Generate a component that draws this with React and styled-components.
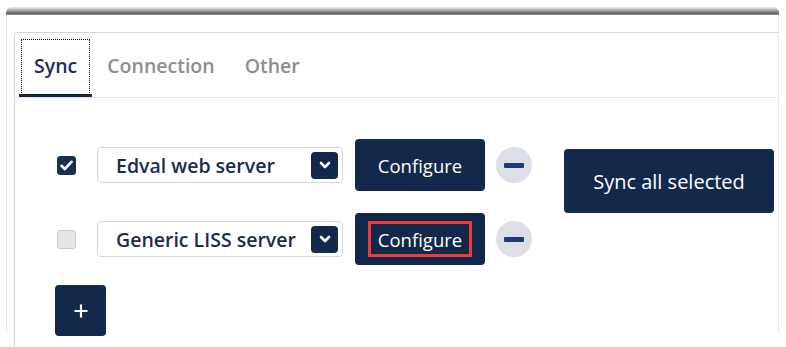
import React from 'react';
import styled, { createGlobalStyle } from 'styled-components';

const NAVY = '#13294b';

const Global = createGlobalStyle`
  html, body { margin: 0; padding: 0; background: #fff; overflow: hidden; }
  body {
    width: 786px;
    height: 347px;
    font-family: "Open Sans", "Noto Sans", sans-serif;
  }
  * { box-sizing: border-box; }
`;

const Frame = styled.div`
  margin: 7px 7px 0 6px;
  height: 326px;
  border-left: 1px solid #e8e8e8;
  border-right: 1px solid #e8e8e8;
  border-radius: 6px 6px 0 0;
  background: #fff;
  display: flex;
  flex-direction: column;
`;

const FrameEdge = styled.div`
  height: 8px;
  margin: 0 -1px;
  border-radius: 6px 6px 0 0;
  background: linear-gradient(to bottom, #ececec 0%, #b8b8b8 35%, #7a7a7a 65%, #606060 85%, #a8a8a8 100%);
  flex-shrink: 0;
`;

const Panel = styled.div`
  margin: 17px 0 0 7px;
  height: 330px;
  flex-shrink: 0;
  border-left: 1px solid #d3d9e1;
  border-top: 1px solid #d3d9e1;
  border-top-left-radius: 4px;
  background: #fff;
`;

const TabBar = styled.div`
  display: flex;
  padding: 4px 0 0 4px;
  border-bottom: 1px solid #e4e4e4;
`;

const Tab = styled.div`
  height: 60px;
  padding: 0 15px;
  display: flex;
  align-items: center;
  font-size: 19.5px;
  font-weight: 600;
  color: ${p => (p.$active ? '#1c2f55' : '#8e8e8e')};
  border-bottom: 3px solid ${p => (p.$active ? NAVY : 'transparent')};
  outline: ${p => (p.$active ? '1px dotted #111' : 'none')};
  outline-offset: -3px;
`;

const Content = styled.div`
  display: flex;
  align-items: flex-start;
  padding: 41px 0 0 40px;
`;

const LeftCol = styled.div`
  display: flex;
  flex-direction: column;
`;

const Rows = styled.div`
  display: flex;
  flex-direction: column;
  gap: 22px;
`;

const Row = styled.div`
  display: flex;
  align-items: center;
  height: 52px;
`;

const Check = styled.div`
  width: 19px;
  height: 19px;
  margin: 0 21px 0 2px;
  border-radius: 3px;
  display: flex;
  align-items: center;
  justify-content: center;
  background: ${p => (p.$checked ? '#1b2d52' : '#e6e6e6')};
  border: 1px solid ${p => (p.$checked ? '#1b2d52' : '#c9c9c9')};
`;

const Select = styled.div`
  width: 246px;
  height: 36px;
  border: 1px solid #d4d8de;
  border-radius: 4px;
  display: flex;
  align-items: center;
  justify-content: space-between;
  padding: 0 4px 0 18px;
  font-size: 19.5px;
  font-weight: 600;
  color: #1b2c4f;
`;

const Chevron = styled.div`
  width: 27px;
  height: 27px;
  border-radius: 4px;
  background: ${NAVY};
  display: flex;
  align-items: center;
  justify-content: center;
`;

const ConfigureButton = styled.button`
  margin-left: 12px;
  width: 130px;
  height: 52px;
  border: none;
  border-radius: 4px;
  background: ${NAVY};
  color: #fff;
  font-family: inherit;
  font-size: 18.5px;
  font-weight: 400;
  display: flex;
  align-items: center;
  justify-content: center;
  padding: 0;
`;

const Highlight = styled.span`
  display: flex;
  align-items: center;
  height: 36px;
  padding: 0 7px;
  border: 3px solid ${p => (p.$on ? '#ee3b3b' : 'transparent')};
`;

const Minus = styled.div`
  margin-left: 11px;
  width: 36px;
  height: 36px;
  border-radius: 50%;
  background: #dcdfe7;
  display: flex;
  align-items: center;
  justify-content: center;
  &::before {
    content: '';
    width: 20px;
    height: 5px;
    background: #203c6e;
    border-radius: 1px;
  }
`;

const PlusButton = styled.button`
  margin-top: 20px;
  width: 51px;
  height: 51px;
  border: none;
  border-radius: 4px;
  background: ${NAVY};
  display: flex;
  align-items: center;
  justify-content: center;
  padding: 0;
`;

const SyncButton = styled.button`
  margin: 10px 0 0 32px;
  width: 210px;
  height: 64px;
  border: none;
  border-radius: 4px;
  background: ${NAVY};
  color: #fff;
  font-family: inherit;
  font-size: 20px;
  font-weight: 400;
  padding: 0;
`;

const CheckIcon = () => (
  <svg width="13" height="11" viewBox="0 0 13 11">
    <path d="M1.5 5.8 L4.8 9 L11.5 1.8" fill="none" stroke="#fff" strokeWidth="2.6" strokeLinecap="round" strokeLinejoin="round" />
  </svg>
);

const ChevronIcon = () => (
  <svg width="12" height="8" viewBox="0 0 12 8">
    <path d="M2 2 L6 6 L10 2" fill="none" stroke="#fff" strokeWidth="2.6" strokeLinecap="round" strokeLinejoin="round" />
  </svg>
);

const PlusIcon = () => (
  <svg width="14" height="14" viewBox="0 0 14 14">
    <path d="M7 0.5 V13.5 M0.5 7 H13.5" stroke="#fff" strokeWidth="2.2" />
  </svg>
);

const servers = [
  { name: 'Edval web server', checked: true, highlight: false },
  { name: 'Generic LISS server', checked: false, highlight: true },
];

export default function App() {
  return (
    <>
      <Global />
      <Frame>
        <FrameEdge />
        <Panel>
          <TabBar>
            <Tab $active>Sync</Tab>
            <Tab>Connection</Tab>
            <Tab>Other</Tab>
          </TabBar>
          <Content>
            <LeftCol>
              <Rows>
                {servers.map(s => (
                  <Row key={s.name}>
                    <Check $checked={s.checked}>{s.checked && <CheckIcon />}</Check>
                    <Select>
                      <span>{s.name}</span>
                      <Chevron><ChevronIcon /></Chevron>
                    </Select>
                    <ConfigureButton>
                      <Highlight $on={s.highlight}>Configure</Highlight>
                    </ConfigureButton>
                    <Minus />
                  </Row>
                ))}
              </Rows>
              <PlusButton><PlusIcon /></PlusButton>
            </LeftCol>
            <SyncButton>Sync all selected</SyncButton>
          </Content>
        </Panel>
      </Frame>
    </>
  );
}
